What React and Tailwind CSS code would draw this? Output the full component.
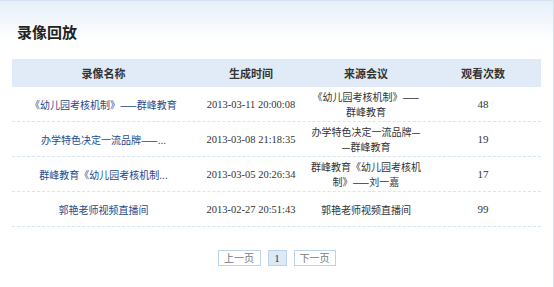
import React from "react";

const rows = [
  {
    name: "《幼儿园考核机制》——群峰教育",
    time: "2013-03-11 20:00:08",
    source: ["《幼儿园考核机制》——", "群峰教育"],
    views: "48",
  },
  {
    name: "办学特色决定一流品牌——...",
    time: "2013-03-08 21:18:35",
    source: ["办学特色决定一流品牌—", "—群峰教育"],
    views: "19",
  },
  {
    name: "群峰教育《幼儿园考核机制...",
    time: "2013-03-05 20:26:34",
    source: ["群峰教育《幼儿园考核机", "制》——刘一嘉"],
    views: "17",
  },
  {
    name: "郭艳老师视频直播间",
    time: "2013-02-27 20:51:43",
    source: ["郭艳老师视频直播间"],
    views: "99",
  },
];

const cjk = "font-['Noto_Sans_CJK_SC',sans-serif]";
const serif = "font-['Liberation_Serif','Noto_Sans_CJK_SC',serif]";
const cols = "grid grid-cols-[183px_112px_118px_116px]";

export default function App() {
  return (
    <div
      className={`w-[554px] h-[287px] overflow-hidden border-t border-r border-[#d3e2f3] bg-[linear-gradient(to_bottom,#e6eff9,#ffffff_40px)] ${cjk}`}
    >
      <div className="h-[58px] pl-[17px] pt-[21px]">
        <h1 className="text-[15px] leading-[20px] font-bold text-[#222]">录像回放</h1>
      </div>

      <div className="mx-[12px] w-[529px]">
        <div className={`${cols} h-[28px] items-center bg-[#e0ebf7] text-[11px] font-bold text-[#333]`}>
          <div className="text-center">录像名称</div>
          <div className="text-center">生成时间</div>
          <div className="text-center">来源会议</div>
          <div className="text-center">观看次数</div>
        </div>

        {rows.map((r) => (
          <div
            key={r.time}
            className={`${cols} h-[35px] items-center border-b border-dashed border-[#d6e4f3] text-[10px] leading-[15px]`}
          >
            <div className="text-center text-[#26498c] whitespace-nowrap">{r.name}</div>
            <div className={`text-center text-[#333] text-[10.5px] ${serif}`}>{r.time}</div>
            <div className="text-center text-[#333] whitespace-nowrap">
              {r.source.map((s) => (
                <div key={s}>{s}</div>
              ))}
            </div>
            <div className={`text-center text-[#333] text-[11px] ${serif}`}>{r.views}</div>
          </div>
        ))}
      </div>

      <div className="mt-[23px] flex justify-center gap-[7px] text-[10px] text-[#777]">
        <span className="w-[43px] h-[16px] leading-[14px] text-center border border-[#bcd3ec] bg-white">上一页</span>
        <span className={`w-[19px] h-[16px] leading-[14px] text-center border border-[#bcd3ec] bg-[#dce9f7] text-[#335] text-[11px] ${serif}`}>1</span>
        <span className="w-[42px] h-[16px] leading-[14px] text-center border border-[#bcd3ec] bg-white">下一页</span>
      </div>
    </div>
  );
}
